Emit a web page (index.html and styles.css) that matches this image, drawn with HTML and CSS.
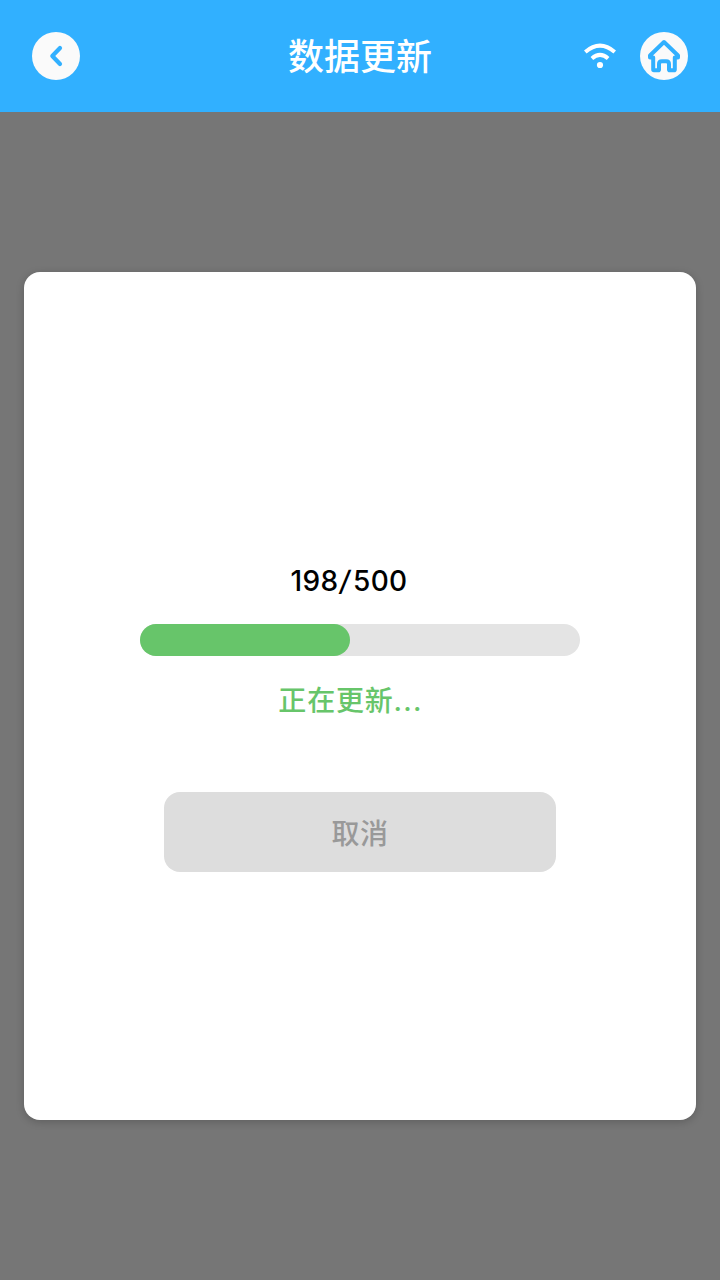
FILE: index.html
```html
<!DOCTYPE html>
<html lang="zh-CN">
<head>
<meta charset="utf-8">
<title>数据更新</title>
<link rel="stylesheet" href="styles.css">
</head>
<body>
<header class="topbar">
  <button class="round" aria-label="返回">
    <svg width="48" height="48" viewBox="0 0 48 48"><path d="M28 16 20.300 24 28 32" class="chevron"/></svg>
  </button>
  <h1 class="title">数据更新</h1>
  <div class="actions">
    <svg class="wifi" width="32" height="26" viewBox="0 0 32 26"><path d="M1.300 9Q16-3.700 30.700 9M7.900 15.400Q16 8.300 24.100 15.400"/><circle cx="16" cy="22" r="3.100"/></svg>
    <button class="round" aria-label="主页">
      <svg width="48" height="48" viewBox="0 0 48 48"><path class="house" d="M24 10 10 23.500V25.500h3.200v12Q13.200 38.200 14 38.200h4.200Q19 38.200 19 37.400V32q0-2.800 2.800-2.800h4.400Q29 29.200 29 32v5.400q0 .8.800.8H34q.8 0 .8-.8V25.500H38v-2Z"/></svg>
    </button>
  </div>
</header>
<main class="overlay">
  <section class="dialog">
    <div class="count">198<span class="slash">/</span>500</div>
    <div class="track"><div class="fill"></div></div>
    <div class="status">正在更新<span class="dots">...</span></div>
    <button class="cancel">取消</button>
  </section>
</main>
</body>
</html>
```
FILE: styles.css
```css
* { box-sizing: border-box; }
body {
  margin: 0;
  height: 1280px;
  display: flex;
  flex-direction: column;
  font-family: Inter, "Noto Sans CJK SC", sans-serif;
  font-weight: 500;
  background: #767676;
}
button { border: 0; padding: 0; font: inherit; }
svg { display: block; fill: none; stroke-linecap: round; stroke-linejoin: round; }
.topbar {
  height: 112px;
  padding: 0 32px;
  display: grid;
  grid-template-columns: 1fr auto 1fr;
  align-items: center;
  background: #31b0ff;
}
.title { margin: 0; padding-top: 2px; color: #fff; font-size: 36px; line-height: 48px; font-weight: 500; }
.round { width: 48px; height: 48px; border-radius: 50%; background: #fafafa; }
.actions { display: flex; align-items: center; justify-content: flex-end; gap: 24px; }
.chevron { stroke: #31b0ff; stroke-width: 4.200; }
.wifi path { stroke: #fff; stroke-width: 4; stroke-linecap: butt; }
.wifi circle { fill: #fff; }
.house { stroke: #31b0ff; stroke-width: 4; }
.overlay { flex: 1; padding: 160px 24px; }
.dialog {
  height: 848px;
  padding-top: 288px;
  display: flex;
  flex-direction: column;
  align-items: center;
  background: #fff;
  border-radius: 16px;
  box-shadow: 0 2px 8px rgba(0, 0, 0, .2);
}
.count { width: 440px; padding: 2px 22px 0 0; text-align: center; font-size: 28px; line-height: 38px; letter-spacing: .3px; color: #000; }
.slash { display: inline-block; margin: 0 2px; transform: skewX(-8deg); }
.track { width: 440px; height: 32px; margin: 24px 0; border-radius: 16px; background: #e4e4e4; }
.fill { width: 210px; height: 32px; border-radius: 16px; background: #67c56a; }
.status { width: 440px; padding: 2px 19px 0 0; text-align: center; font-size: 28px; line-height: 38px; letter-spacing: .8px; color: #67c56a; }
.dots { letter-spacing: 1.200px; }
.cancel { width: 392px; height: 80px; margin-top: 72px; border-radius: 16px; background: #ddd; color: #999; font-size: 28px; letter-spacing: .5px; }
```
